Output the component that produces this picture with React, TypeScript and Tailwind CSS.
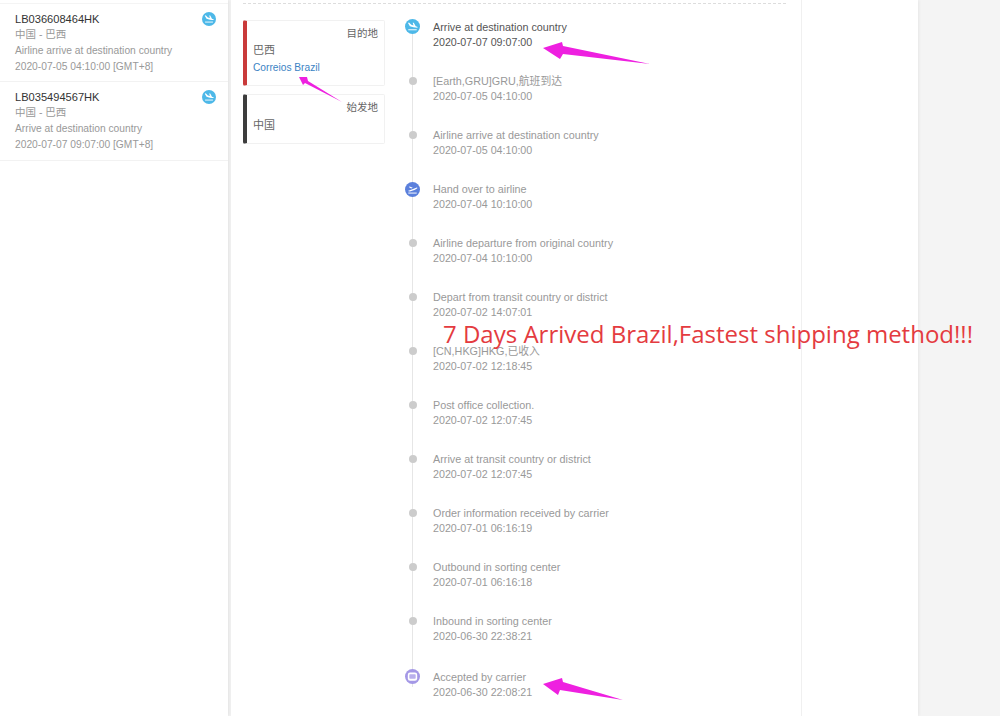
const events = [
	{ title: "Arrive at destination country", time: "2020-07-07 09:07:00", kind: "landing", active: true },
	{ title: "[Earth,GRU]GRU,航班到达", time: "2020-07-05 04:10:00", kind: "dot" },
	{ title: "Airline arrive at destination country", time: "2020-07-05 04:10:00", kind: "dot" },
	{ title: "Hand over to airline", time: "2020-07-04 10:10:00", kind: "plane" },
	{ title: "Airline departure from original country", time: "2020-07-04 10:10:00", kind: "dot" },
	{ title: "Depart from transit country or district", time: "2020-07-02 14:07:01", kind: "dot" },
	{ title: "[CN,HKG]HKG,已收入", time: "2020-07-02 12:18:45", kind: "dot" },
	{ title: "Post office collection.", time: "2020-07-02 12:07:45", kind: "dot" },
	{ title: "Arrive at transit country or district", time: "2020-07-02 12:07:45", kind: "dot" },
	{ title: "Order information received by carrier", time: "2020-07-01 06:16:19", kind: "dot" },
	{ title: "Outbound in sorting center", time: "2020-07-01 06:16:18", kind: "dot" },
	{ title: "Inbound in sorting center", time: "2020-06-30 22:38:21", kind: "dot" },
	{ title: "Accepted by carrier", time: "2020-06-30 22:08:21", kind: "box" },
]

const parcels = [
	{ no: "LB036608464HK", status: "Airline arrive at destination country", time: "2020-07-05 04:10:00 [GMT+8]" },
	{ no: "LB035494567HK", status: "Arrive at destination country", time: "2020-07-07 09:07:00 [GMT+8]" },
]

function LandingIcon({ size = 15 }: { size?: number }) {
	return (
		<svg width={size} height={size} viewBox="0 0 16 16" className="block">
			<circle cx="8" cy="8" r="8" fill="#4db8e8" />
			<path d="M3.200 4.200l1-.4 2.600 2.400 2.300.7-.9-3 1.200.2 2 3.500 1.600.6c.6.3.6 1 0 1-2.400 0-5.500-.5-7.800-1.500z" fill="#fff" />
			<rect x="3.500" y="11" width="9" height="1" fill="#fff" />
		</svg>
	)
}

function PlaneIcon() {
	return (
		<svg width="15" height="15" viewBox="0 0 16 16" className="block translate-y-px">
			<circle cx="8" cy="8" r="8" fill="#5b80dc" />
			<path d="M3 9.500l9-3.500c1-.3 1.600.4.800 1l-2.600 1.600-1 .2-4 1.400z" fill="#fff" />
			<path d="M4 5.200l1-.4 3.300 1.300-1.800.8z" fill="#fff" />
			<rect x="3.500" y="11.300" width="9" height="1" fill="#fff" />
		</svg>
	)
}

function BoxIcon() {
	return (
		<svg width="15" height="15" viewBox="0 0 16 16" className="block">
			<circle cx="8" cy="8" r="8" fill="#a498e6" />
			<rect x="3" y="3.600" width="10" height="8.800" rx="2.400" fill="#fff" />
			<rect x="4.600" y="5.600" width="6.800" height="4.800" rx=".8" fill="#b9b0ec" />
		</svg>
	)
}

function Marker({ kind }: { kind: string }) {
	if (kind === "landing") return <LandingIcon />
	if (kind === "plane") return <PlaneIcon />
	if (kind === "box") return <BoxIcon />
	return <span className="block size-[8px] rounded-full bg-[#cccccc]" />
}

function Sidebar() {
	return (
		<aside className="h-full w-[228px] shrink-0 bg-white pt-[3px] shadow-[1px_0_3px_rgba(0,0,0,0.08)]">
			<div className="border-t border-[#f4f4f4]">
				{parcels.map((p, i) => (
					<div
						key={p.no}
						className={
							i === 1
								? "relative h-[79px] border-b border-[#f2f2f2] pl-[15px] pt-[8px]"
								: "relative h-[78px] border-b border-[#f2f2f2] pl-[15px] pt-[8px]"
						}
					>
						<div className="text-[11.100px] leading-[15px] text-[#333]">{p.no}</div>
						<div className="text-[10.500px] leading-[15px] text-[#999]">中国 - 巴西</div>
						<div className="mt-[1px] text-[10.250px] leading-[15px] text-[#999]">{p.status}</div>
						<div className="mt-[1px] text-[10.250px] leading-[16px] text-[#999]">{p.time}</div>
						<div className="absolute left-[202px] top-[8px]">
							<LandingIcon size={14} />
						</div>
					</div>
				))}
			</div>
		</aside>
	)
}

function Places() {
	return (
		<div className="w-[142px] shrink-0 pt-[16px]">
			<div className="h-[66px] rounded-[2px] border border-l-4 border-[#f1f1f1] border-l-[#c93a3a] pl-[6px] pr-[6px] pt-[5px]">
				<div className="text-right text-[10.500px] leading-[14px] text-[#666]">目的地</div>
				<div className="mt-[2px] text-[11px] leading-[16px] text-[#666]">巴西</div>
				<div className="mt-[2px] text-[10.200px] leading-[16px] text-[#3b83c4]">Correios Brazil</div>
			</div>
			<div className="mt-[8px] h-[50px] rounded-[2px] border border-l-4 border-[#f1f1f1] border-l-[#3d3d3d] pl-[6px] pr-[6px] pt-[5px]">
				<div className="text-right text-[10.500px] leading-[14px] text-[#666]">始发地</div>
				<div className="mt-[3px] text-[11px] leading-[16px] text-[#666]">中国</div>
			</div>
		</div>
	)
}

function Timeline() {
	return (
		<div className="relative ml-[20px] w-[400px] pt-[15px]">
			<div className="absolute bottom-[36px] left-[7px] top-[24px] w-px bg-[#e6e6e6]" />
			{events.map((e, i) => (
				<div key={i} className={i === events.length - 2 ? "relative flex h-[56px]" : "relative flex h-[54px]"}>
					<div className="flex h-[15px] w-[15px] shrink-0 items-center justify-center">
						<Marker kind={e.kind} />
					</div>
					<div className={e.active ? "ml-[13px] text-[#555]" : "ml-[13px] text-[#999]"}>
						<div className="pt-[1px] text-[10.800px] leading-[15px]">{e.title}</div>
						<div className="text-[10.700px] leading-[15px]">{e.time}</div>
					</div>
				</div>
			))}
		</div>
	)
}

function Arrow({ points }: { points: string }) {
	return (
		<svg width="1000" height="716" viewBox="0 0 1000 716" className="absolute inset-0">
			<polygon points={points} fill="#ee20e0" />
		</svg>
	)
}

export default function App() {
	return (
		<div
			className="relative flex h-[716px] w-[1000px] overflow-hidden bg-[#f4f4f4]"
			style={{ fontFamily: '"Liberation Sans", "Noto Sans CJK SC", sans-serif' }}
		>
			<Sidebar />
			<main className="ml-[3px] h-full w-[687px] shrink-0 bg-white pl-[12px] shadow-[1px_0_3px_rgba(0,0,0,0.06)]">
				<div className="flex h-full">
					<div className="h-full w-[558px] shrink-0">
						<div className="mt-[3px] w-[543px] border-t border-dashed border-[#ddd]" />
						<div className="flex">
							<Places />
							<Timeline />
						</div>
					</div>
					<div className="h-full w-px bg-[#f0f0f0]" />
				</div>
			</main>

			<div
				className="absolute left-[443px] top-[316px] whitespace-nowrap text-[24px] leading-[36px] text-[#e43b40]"
				style={{ fontFamily: '"Open Sans", sans-serif' }}
			>
				7 Days Arrived Brazil,Fastest shipping method!!!
			</div>

			{/* pink annotation arrows */}
			<Arrow points="650,64 563,46 562,42 543,48 560,59 563,54" />
			<Arrow points="623,700 563,682 562,678 543,684 558,695 560,690" />
			<Arrow points="342,102 308,81 307,77 299,77 303,85 305,83" />
		</div>
	)
}
